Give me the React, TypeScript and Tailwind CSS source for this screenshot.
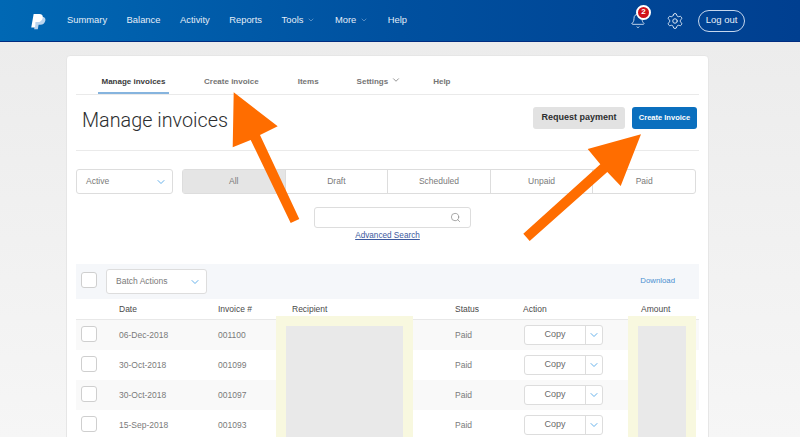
import React from 'react';
import { Bell, ChevronDown, Search, Settings } from 'lucide-react';

const navItems = [
  { label: 'Summary' },
  { label: 'Balance' },
  { label: 'Activity' },
  { label: 'Reports' },
  { label: 'Tools', menu: true },
  { label: 'More', menu: true },
  { label: 'Help' },
];

const filters = ['All', 'Draft', 'Scheduled', 'Unpaid', 'Paid'];

const invoices = [
  { date: '06-Dec-2018', id: '001100' },
  { date: '30-Oct-2018', id: '001099' },
  { date: '30-Oct-2018', id: '001097' },
  { date: '15-Sep-2018', id: '001093' },
];

const gridCols = 'grid grid-cols-[43px_99px_74px_163px_68px_118px_58px] items-center';

const Checkbox = () => (
  <div className="mb-[3px] ml-[5px] h-4 w-4 rounded-[3px] border border-[#cfcfcf] bg-white" />
);

const BlueChevron = () => (
  <ChevronDown className="h-[12px] w-[12px] text-[#55a8e8]" strokeWidth={1.8} />
);

const Logo = () => (
  <svg width="15" height="18" viewBox="0 0 17 19" className="mt-[2px] shrink-0">
    <path d="M6 3.5h6.2c3 0 4.6 1.6 4.1 4.2-.6 3.2-2.8 4.8-5.6 4.8H8.6l-.9 5.3H3.6z" fill="#b9d4ee" />
    <path d="M3 .5h6.4c2.9 0 4.4 1.5 3.9 4.1-.6 3.3-2.9 5-5.8 5H5.4l-1 6H.3z" fill="#ffffff" />
  </svg>
);

export default function App() {
  return (
    <div className="relative h-[437px] w-[800px] overflow-hidden bg-gradient-to-b from-[#ebebeb] to-[#f6f6f6] font-['Liberation_Sans',sans-serif]">
      <header className="flex h-[42px] items-center border-b border-[#002c80] bg-gradient-to-r from-[#0068b4] via-[#00509f] to-[#003f90] pl-[31px] pr-[55px] text-white">
        <Logo />
        <nav className="ml-[21px] flex items-center gap-[19.5px] text-[9.4px] text-[#e3edf8]">
          {navItems.map(item => (
            <span key={item.label} className="flex items-center gap-[4px]">
              {item.label}
              {item.menu && <ChevronDown className="h-[8px] w-[8px] text-[#a9c4e4]" strokeWidth={1.5} />}
            </span>
          ))}
        </nav>
        <div className="relative ml-auto flex items-center">
          <Bell className="h-[16px] w-[16px] text-[#dbe7f5]" strokeWidth={1.3} />
          <span className="absolute left-[6px] top-[-8px] flex h-[15px] w-[15px] items-center justify-center rounded-full border-2 border-white bg-[#d0111b] text-[8px] font-bold text-white">
            2
          </span>
        </div>
        <Settings className="ml-[20px] h-[18px] w-[18px] text-[#dbe7f5]" strokeWidth={1.3} />
        <button className="ml-[14px] h-[22px] w-[47px] rounded-full border border-[#c5d7ee] text-[9.5px] text-[#e3edf8]">
          Log out
        </button>
      </header>

      <main className="ml-[66px] mt-[13px] w-[643px] rounded-t-[4px] border border-[#e6e6e6] bg-white px-[9px]">
        <div className="flex h-[39px] items-end border-b border-[#eaeaea] text-[8px] font-bold text-[#757575]">
          <span className="ml-[22px] w-[71px] border-b-2 border-[#86b4de] pb-[4px] text-center text-[#3b3b3b]">
            Manage invoices
          </span>
          <span className="ml-[35px] pb-[6px]">Create invoice</span>
          <span className="ml-[39px] pb-[6px]">Items</span>
          <span className="ml-[38px] flex items-center gap-[3px] pb-[6px]">
            Settings
            <ChevronDown className="mb-[3px] h-[10px] w-[10px] text-[#555555]" strokeWidth={1.5} />
          </span>
          <span className="ml-[32px] pb-[6px]">Help</span>
        </div>

        <div className="flex h-[56px] items-center border-b border-[#eaeaea] pb-[6px]">
          <h1 className="ml-[6px] mt-[2px] font-['Roboto',sans-serif] text-[19.8px] font-light text-[#2c2e2f]">
            Manage invoices
          </h1>
          <button className="mb-[4px] ml-auto h-[22px] w-[92px] rounded-[3px] bg-[#e2e2e2] text-[9px] font-bold text-[#2c2e2f]">
            Request payment
          </button>
          <button className="mb-[4px] ml-[7px] mr-[2px] h-[22px] w-[65px] rounded-[3px] bg-[#0a6fbe] text-[7.5px] font-bold text-white">
            Create Invoice
          </button>
        </div>

        <div className="mt-[18px] flex h-[25px] text-[8.5px] text-[#7a7a7a]">
          <div className="flex w-[97px] items-center justify-between rounded-[3px] border border-[#dddddd] pl-[9px] pr-[5px]">
            Active
            <BlueChevron />
          </div>
          <div className="ml-[9px] flex w-[514px] rounded-[3px] border border-[#dddddd]">
            {filters.map((f, i) => (
              <div
                key={f}
                className={`flex flex-1 items-center justify-center pb-[1px] ${i > 0 ? 'border-l border-[#dddddd]' : 'bg-[#e5e5e5]'}`}
              >
                {f}
              </div>
            ))}
          </div>
        </div>

        <div className="mt-[13px] flex flex-col items-center">
          <div className="ml-[9px] flex h-[21px] w-[157px] items-center justify-end rounded-[3px] border border-[#dddddd] pr-[9px]">
            <Search className="h-[11px] w-[11px] text-[#8a8a8a]" strokeWidth={1.6} />
          </div>
          <a className="mt-[2px] text-[8.2px] leading-[11px] text-[#3d5a9e] underline">Advanced Search</a>
        </div>

        <div className="mt-[23px] flex h-[35px] items-center bg-[#f5f7fa]">
          <Checkbox />
          <div className="ml-[9px] flex h-[25px] w-[101px] items-center justify-between rounded-[3px] border border-[#dddddd] bg-white pl-[9px] pr-[5px] text-[8.5px] text-[#7a7a7a]">
            Batch Actions
            <BlueChevron />
          </div>
          <a className="mb-[1px] ml-auto mr-[24px] text-[7.8px] text-[#4a8fd0]">Download</a>
        </div>

        <div className="relative">
          <div className={`${gridCols} h-[21px] border-b border-[#e8e8e8] text-[8.5px] text-[#4a4a4a]`}>
            <span />
            <span>Date</span>
            <span>Invoice #</span>
            <span>Recipient</span>
            <span>Status</span>
            <span>Action</span>
            <span>Amount</span>
          </div>
          {invoices.map((inv, i) => (
            <div
              key={inv.id}
              className={`${gridCols} h-[30px] text-[8.5px] text-[#7a7a7a] ${i % 2 === 0 ? 'bg-[#f9f9f9]' : 'bg-white'}`}
            >
              <Checkbox />
              <span>{inv.date}</span>
              <span>{inv.id}</span>
              <span />
              <span>Paid</span>
              <div className="ml-[1px] flex h-[20px] w-[79px] rounded-[3px] border border-[#dddddd] bg-white">
                <span className="flex flex-1 items-center justify-center text-[9px] text-[#6a6a6a]">Copy</span>
                <span className="flex w-[17px] items-center justify-center border-l border-[#dddddd]">
                  <BlueChevron />
                </span>
              </div>
              <span />
            </div>
          ))}

          {/* redaction blocks sit on top of the table */}
          <div className="absolute left-[200px] top-[17px] h-[200px] w-[137px] border-[10px] border-[#f8f8df] bg-[#e9e9e9]" />
          <div className="absolute left-[552px] top-[17px] h-[200px] w-[68px] border-[10px] border-[#f8f8df] bg-[#e9e9e9]" />
        </div>
      </main>

      <svg width="800" height="437" className="pointer-events-none absolute left-0 top-0">
        <polygon points="233.7,92.3 277.7,126.3 260,135 299.3,219 290.7,223 250.7,140 232.7,147.3" fill="#ff6d00" />
        <polygon points="641,134.3 587.7,149 600.3,164.3 523.3,233.7 529.7,241 607.3,172 620.7,186" fill="#ff6d00" />
      </svg>
    </div>
  );
}
